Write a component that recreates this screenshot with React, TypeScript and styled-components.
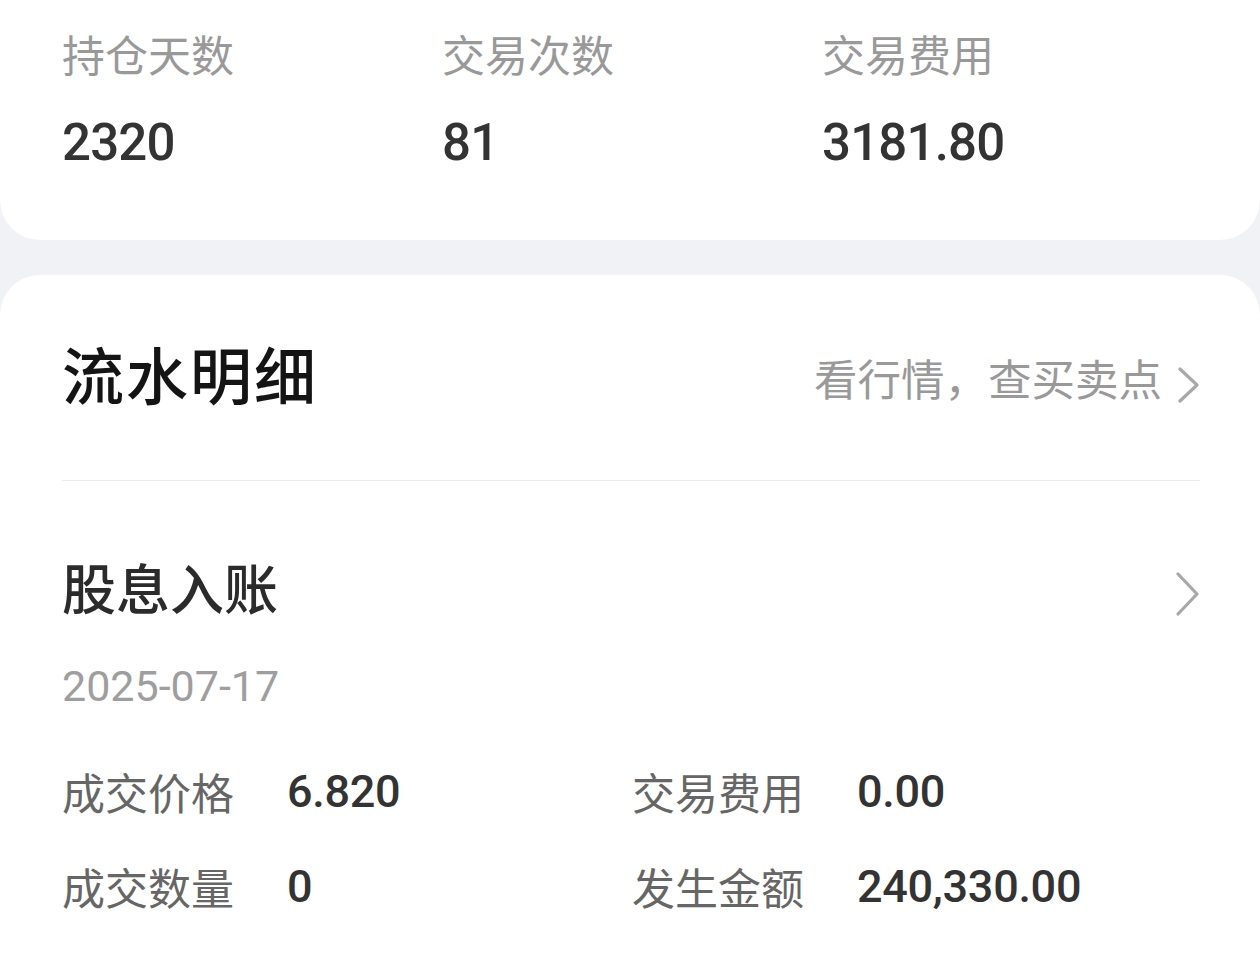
import React from "react";
import styled, { createGlobalStyle } from "styled-components";

const Global = createGlobalStyle`
  html, body { margin: 0; padding: 0; background: #f1f2f6; }
  body { font-family: Roboto, "Noto Sans CJK SC", sans-serif; }
`;

const Page = styled.div`
  width: 1260px;
  min-height: 980px;
  background: #f1f2f6;
  display: flex;
  flex-direction: column;
  gap: 35px;
  overflow: hidden;
`;

const StatsCard = styled.div`
  background: #fff;
  border-radius: 0 0 40px 40px;
  padding: 29px 62px 67px;
  display: grid;
  grid-template-columns: 380px 380px 1fr;
`;

const Stat = styled.div`
  display: flex;
  flex-direction: column;
  gap: 28px;
`;

const StatLabel = styled.div`
  font-size: 43px;
  line-height: 56px;
  color: #999;
`;

const StatValue = styled.div`
  font-family: Roboto, sans-serif;
  font-size: 51px;
  line-height: 60px;
  font-weight: 500;
  color: #333;
  letter-spacing: -0.8px;
`;

const FlowCard = styled.div`
  background: #fff;
  border-radius: 40px 40px 0 0;
  padding: 0 60px 80px 62px;
  flex: 1;
`;

const Header = styled.div`
  height: 205px;
  display: flex;
  align-items: center;
  justify-content: space-between;
  border-bottom: 1px solid #ececec;
`;

const Title = styled.div`
  font-size: 62px;
  font-weight: 500;
  color: #141414;
  line-height: 70px;
  letter-spacing: 2px;
  margin-top: 3px;
`;

const Link = styled.div`
  display: flex;
  align-items: center;
  gap: 16px;
  font-size: 43.5px;
  color: #999;
  line-height: 56px;
  margin-top: 8px;
`;

const LinkArrow = styled.span`
  display: flex;
  margin-top: 6px;
`;

const Item = styled.div`
  padding-top: 76px;
`;

const ItemHead = styled.div`
  display: flex;
  align-items: center;
  justify-content: space-between;
`;

const ItemTitle = styled.div`
  font-size: 54px;
  font-weight: 500;
  color: #2b2b2b;
  line-height: 70px;
`;

const ItemArrow = styled.span`
  display: flex;
  margin-top: 4px;
`;

const DateText = styled.div`
  margin-top: 31px;
  font-family: Roboto, sans-serif;
  font-size: 43px;
  line-height: 56px;
  color: #9e9e9e;
`;

const Fields = styled.div`
  margin-top: 46px;
  display: grid;
  grid-template-columns: 570px 1fr;
  row-gap: 35px;
`;

const Field = styled.div`
  display: grid;
  grid-template-columns: 225px 1fr;
  align-items: center;
  height: 60px;
`;

const FieldLabel = styled.div`
  font-size: 43px;
  color: #666;
`;

const FieldValue = styled.div`
  font-family: Roboto, sans-serif;
  font-size: 45px;
  font-weight: 500;
  color: #333;
  letter-spacing: -0.3px;
`;

const Chevron = ({ w, h }: { w: number; h: number }) => (
  <svg width={w} height={h} viewBox={`0 0 ${w} ${h}`} fill="none">
    <polyline
      points={`2,2 ${w - 3},${h / 2} 2,${h - 2}`}
      stroke="#a8a8a8"
      strokeWidth={3.2}
      strokeLinecap="round"
      strokeLinejoin="round"
    />
  </svg>
);

const stats = [
  { label: "持仓天数", value: "2320" },
  { label: "交易次数", value: "81" },
  { label: "交易费用", value: "3181.80" },
];

const fields = [
  { label: "成交价格", value: "6.820" },
  { label: "交易费用", value: "0.00" },
  { label: "成交数量", value: "0" },
  { label: "发生金额", value: "240,330.00" },
];

export default function App() {
  return (
    <>
      <Global />
      <Page>
        <StatsCard>
          {stats.map((s) => (
            <Stat key={s.label}>
              <StatLabel>{s.label}</StatLabel>
              <StatValue>{s.value}</StatValue>
            </Stat>
          ))}
        </StatsCard>
        <FlowCard>
          <Header>
            <Title>流水明细</Title>
            <Link>
              看行情，查买卖点
              <LinkArrow>
                <Chevron w={22} h={36} />
              </LinkArrow>
            </Link>
          </Header>
          <Item>
            <ItemHead>
              <ItemTitle>股息入账</ItemTitle>
              <ItemArrow>
                <Chevron w={24} h={44} />
              </ItemArrow>
            </ItemHead>
            <DateText>2025-07-17</DateText>
            <Fields>
              {fields.map((f) => (
                <Field key={f.label}>
                  <FieldLabel>{f.label}</FieldLabel>
                  <FieldValue>{f.value}</FieldValue>
                </Field>
              ))}
            </Fields>
          </Item>
        </FlowCard>
      </Page>
    </>
  );
}
